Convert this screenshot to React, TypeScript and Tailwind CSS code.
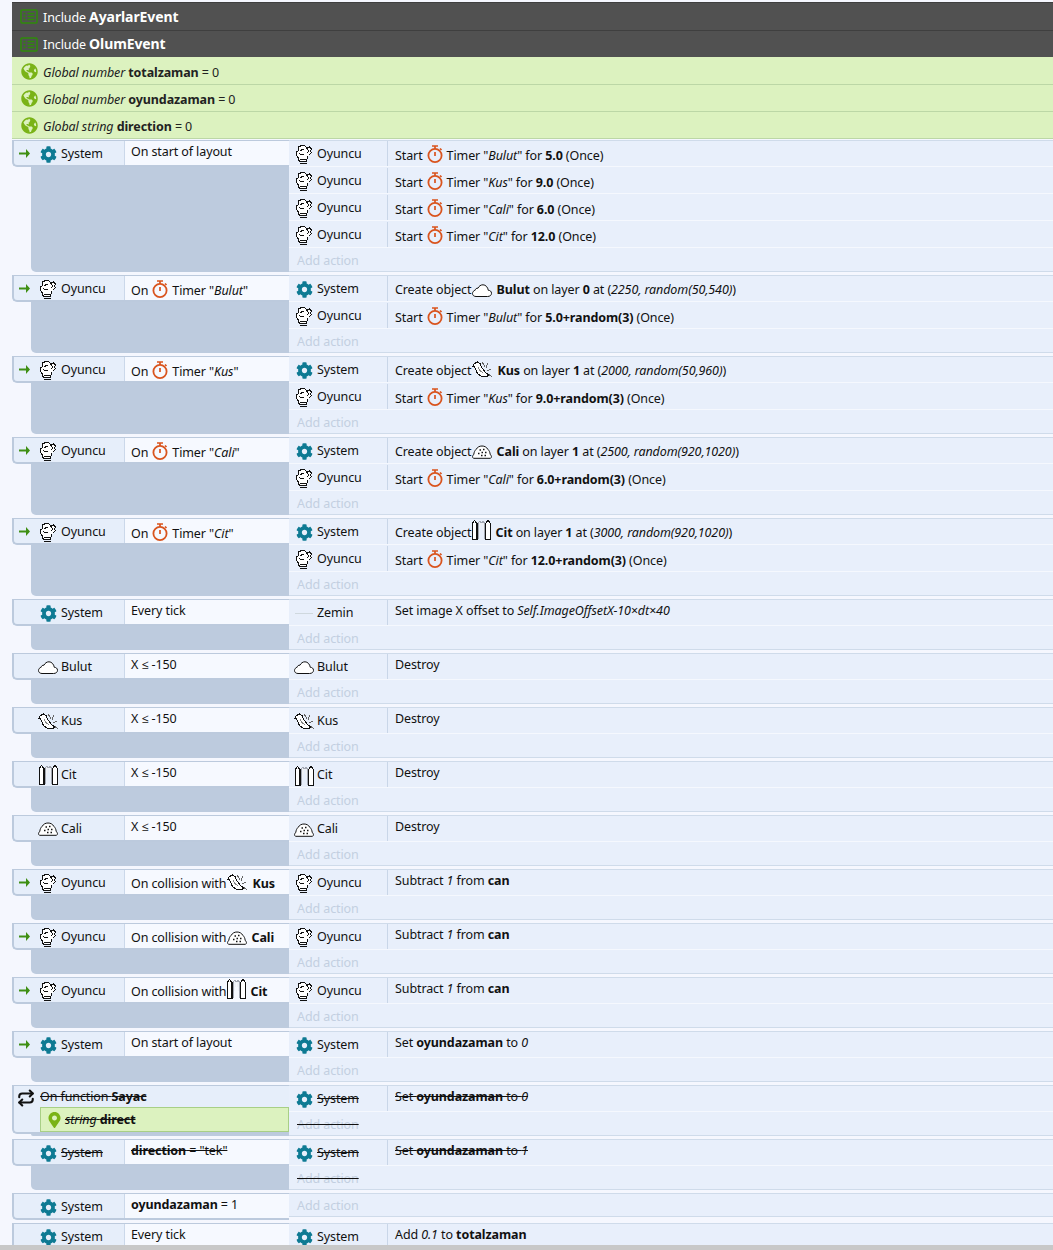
import type { ReactNode } from "react";
import { FaCog, FaGlobeAmericas, FaMapMarkerAlt } from "react-icons/fa";
import { Repeat } from "lucide-react";

type ObjName = "System" | "Oyuncu" | "Bulut" | "Kus" | "Cit" | "Cali" | "Zemin";

function OyuncuIcon() {
  return (
    <svg width="17" height="21" viewBox="0 0 17 21" fill="none" stroke="#111" strokeWidth="1" shapeRendering="crispEdges">
      <path d="M5.500 1.500h3l2 2v1l3-1.500 2 2-1 2 1 1.500-3 3-1.500 1v2.500l-1 2.500h-6l-1.500-1.500v-2l-2-2.500v-3.500l2-1.500v-3.500z" fill="#fff" />
      <path d="M4.500 6.500c1.500-1 3-1 4 0M3.500 9.500c1.500 1.500 3 1.500 4 .5M11.500 5.500l1.500 1.500-2 2" />
      <path d="M3.500 15.500h7M3.500 17.500h7M3.500 19.500h7" />
    </svg>
  );
}

function Cloud() {
  return (
    <svg width="20" height="13" viewBox="0 0 20 13" fill="#fff" stroke="#111" strokeWidth="1">
      <path d="M4 12.500h11.500c2.500 0 4-1.400 4-3.200 0-1.900-1.500-3-3.200-3C15.800 3.300 13.700.8 11 .8c-2.300 0-4 1.300-5 3.400-1.400-.3-2.600.7-2.800 2C1.700 6.600.5 8 .5 9.500c0 1.800 1.500 3 3.500 3z" />
    </svg>
  );
}

function Kus() {
  return (
    <svg width="21" height="17" viewBox="0 0 21 17" fill="none" stroke="#111" strokeWidth="1" shapeRendering="crispEdges">
      <path d="M10 1l3.500 5.500M15.500 2l-1.500 5M19 8l-4 2M16.500 13l3.500 3" stroke="#666" />
      <path d="M.5 5.500 2.500 2.500l3-1.500 2.500 1.500 1.500 3.500 3.500 5 3.500 3-2 2-5-.5-4-3L3.500 8l-1-2.500z" fill="#fff" />
      <path d="M6 6l2 3.500 3 2.500" stroke="#888" />
    </svg>
  );
}

function Cit() {
  return (
    <svg width="19" height="20" viewBox="0 0 19 20" fill="none" stroke="#111" strokeWidth="1.100" shapeRendering="crispEdges">
      <path d="M6 19V3.500L8 1l1.500 2.500M9.500 3.500 11 1l2 2.500V19" stroke="#a2a7b2" fill="#eef1f6" />
      <path d="M.5 19.500V3.500L2.500.5l2.500 3v16z" fill="#fff" />
      <path d="M13.500 19.500V3.500L16 .5l2.500 3v16z" fill="#fff" />
    </svg>
  );
}

function Cali() {
  return (
    <svg width="20" height="14" viewBox="0 0 20 14" fill="#fff" stroke="#111" strokeWidth="1">
      <path d="M1.500 13.300C.2 12.600.2 10.300 1.800 9.500 2 7 3 5.500 4 4.500 5.500 2 7.500 1 10 1s4.500 1 6 3.500c1 1 2 2.500 2.200 5 1.600.8 1.600 3.100.3 3.800z" />
      <path d="M7.500 5h1.500M11 4.500h1.500M9.500 7.500H11M13 7.500h1.500M6 8.500h1.500M9 10.500h1.500M12.500 10.500H14" strokeWidth="1.400" />
    </svg>
  );
}

function ObjIcon({ name }: { name: ObjName }) {
  if (name === "System") return <FaCog className="h-[17px] w-[17px] text-[#0e7a93]" />;
  if (name === "Oyuncu") return <OyuncuIcon />;
  if (name === "Bulut") return <Cloud />;
  if (name === "Kus") return <Kus />;
  if (name === "Cit") return <Cit />;
  if (name === "Cali") return <Cali />;
  return <span className="block h-px w-[18px] bg-[#cfd8de]" />;
}

function Timer() {
  return (
    <svg className="mx-[4px] inline-block align-[-3px]" width="16" height="18" viewBox="0 0 16 18" fill="none" stroke="#d9541e">
      <circle cx="8" cy="10.500" r="6.600" strokeWidth="1.800" />
      <path d="M5 1h6M8 1v3M8 7v4M13 3.500l1.500 1.500" strokeWidth="1.700" />
    </svg>
  );
}

function InlineObj({ name }: { name: ObjName }) {
  return (
    <span className="mx-[1px] inline-flex h-[13px] items-end align-[-3px]">
      <ObjIcon name={name} />
    </span>
  );
}

function B({ children }: { children: ReactNode }) {
  return <b className="font-bold text-[#111]">{children}</b>;
}

function I({ children }: { children: ReactNode }) {
  return <i className="italic">{children}</i>;
}

function StartTimer({ name, time }: { name: string; time: string }) {
  return (
    <span className="inline-block pt-[4px]">
      Start
      <Timer />
      Timer "<I>{name}</I>" for <B>{time}</B> (Once)
    </span>
  );
}

function OnTimer({ name }: { name: string }) {
  return (
    <span className="inline-block pt-[4px]">
      On
      <Timer />
      Timer "<I>{name}</I>"
    </span>
  );
}

function CreateObj({ name, layer, x, y }: { name: ObjName; layer: string; x: string; y: string }) {
  return (
    <span className="inline-block pt-[7px]">
      Create object
      <InlineObj name={name} /> <B>{name}</B> on layer <B>{layer}</B> at (<I>{x}, {y}</I>)
    </span>
  );
}

function Collision({ name }: { name: ObjName }) {
  return (
    <span className="inline-block pt-[6px]">
      On collision with
      <InlineObj name={name} /> <B>{name}</B>
    </span>
  );
}

function Subtract() {
  return (
    <>
      Subtract <I>1</I> from <B>can</B>
    </>
  );
}

type Action = { obj: ObjName; text: ReactNode };

type EventData = {
  obj: ObjName;
  cond: ReactNode;
  trigger?: boolean;
  off?: boolean;
  actions: Action[];
  last?: boolean;
};

const xBelow = <>X ≤ -150</>;

const events: EventData[] = [
  {
    obj: "System",
    cond: "On start of layout",
    trigger: true,
    actions: [
      { obj: "Oyuncu", text: <StartTimer name="Bulut" time="5.0" /> },
      { obj: "Oyuncu", text: <StartTimer name="Kus" time="9.0" /> },
      { obj: "Oyuncu", text: <StartTimer name="Cali" time="6.0" /> },
      { obj: "Oyuncu", text: <StartTimer name="Cit" time="12.0" /> },
    ],
  },
  {
    obj: "Oyuncu",
    cond: <OnTimer name="Bulut" />,
    trigger: true,
    actions: [
      { obj: "System", text: <CreateObj name="Bulut" layer="0" x="2250" y="random(50,540)" /> },
      { obj: "Oyuncu", text: <StartTimer name="Bulut" time="5.0+random(3)" /> },
    ],
  },
  {
    obj: "Oyuncu",
    cond: <OnTimer name="Kus" />,
    trigger: true,
    actions: [
      { obj: "System", text: <CreateObj name="Kus" layer="1" x="2000" y="random(50,960)" /> },
      { obj: "Oyuncu", text: <StartTimer name="Kus" time="9.0+random(3)" /> },
    ],
  },
  {
    obj: "Oyuncu",
    cond: <OnTimer name="Cali" />,
    trigger: true,
    actions: [
      { obj: "System", text: <CreateObj name="Cali" layer="1" x="2500" y="random(920,1020)" /> },
      { obj: "Oyuncu", text: <StartTimer name="Cali" time="6.0+random(3)" /> },
    ],
  },
  {
    obj: "Oyuncu",
    cond: <OnTimer name="Cit" />,
    trigger: true,
    actions: [
      { obj: "System", text: <CreateObj name="Cit" layer="1" x="3000" y="random(920,1020)" /> },
      { obj: "Oyuncu", text: <StartTimer name="Cit" time="12.0+random(3)" /> },
    ],
  },
  {
    obj: "System",
    cond: "Every tick",
    actions: [
      {
        obj: "Zemin",
        text: (
          <>
            Set image X offset to <I>Self.ImageOffsetX-10×dt×40</I>
          </>
        ),
      },
    ],
  },
  { obj: "Bulut", cond: xBelow, actions: [{ obj: "Bulut", text: "Destroy" }] },
  { obj: "Kus", cond: xBelow, actions: [{ obj: "Kus", text: "Destroy" }] },
  { obj: "Cit", cond: xBelow, actions: [{ obj: "Cit", text: "Destroy" }] },
  { obj: "Cali", cond: xBelow, actions: [{ obj: "Cali", text: "Destroy" }] },
  { obj: "Oyuncu", cond: <Collision name="Kus" />, trigger: true, actions: [{ obj: "Oyuncu", text: <Subtract /> }] },
  { obj: "Oyuncu", cond: <Collision name="Cali" />, trigger: true, actions: [{ obj: "Oyuncu", text: <Subtract /> }] },
  { obj: "Oyuncu", cond: <Collision name="Cit" />, trigger: true, actions: [{ obj: "Oyuncu", text: <Subtract /> }] },
  {
    obj: "System",
    cond: "On start of layout",
    trigger: true,
    actions: [
      {
        obj: "System",
        text: (
          <>
            Set <B>oyundazaman</B> to <I>0</I>
          </>
        ),
      },
    ],
  },
];

function ObjCell({ name, off }: { name: ObjName; off?: boolean }) {
  return (
    <span className="flex items-center">
      <span className="flex w-[22px] justify-center">
        <ObjIcon name={name} />
      </span>
      <span className={`ml-[2px] ${off ? "line-through" : ""}`}>{name}</span>
    </span>
  );
}

function ActionRow({ action, off }: { action: Action; off?: boolean }) {
  return (
    <div className="flex h-[27px] items-center border-b border-[#f5f8fe] bg-[#e8effb] first:shadow-[inset_0_1px_0_#cfdbea]">
      <div className="flex h-[25px] w-[99px] shrink-0 items-center border-r border-[#c9d6e8] pl-[4px] pt-[3px]">
        <ObjCell name={action.obj} off={off} />
      </div>
      <div className={`pb-[2px] pl-[7px] whitespace-nowrap ${off ? "line-through" : ""}`}>{action.text}</div>
    </div>
  );
}

function AddAction({ off }: { off?: boolean }) {
  return (
    <div className="flex h-[24px] items-center border-b border-[#cfdbea] bg-[#e8effb] pl-[8px] pt-[4px] text-[#c3cfe1] first:shadow-[inset_0_1px_0_#cfdbea]">
      <span className={off ? "line-through decoration-[#111]" : ""}>Add action</span>
    </div>
  );
}

function ArrowMark() {
  return (
    <svg width="11" height="9" viewBox="0 0 11 9" fill="#3f8f14">
      <path d="M0 3.500h7V0l4 4.500L7 9V5.500H0z" />
    </svg>
  );
}

function ConditionRow({ ev }: { ev: EventData }) {
  return (
    <div className="flex h-[27px] rounded-bl-[5px] border-b-2 border-l-2 border-t border-[#bccadd] bg-[#e6eefa]">
      <div className="flex w-[23px] shrink-0 items-center justify-center pr-[3px]">{ev.trigger && <ArrowMark />}</div>
      <div className="flex w-[88px] shrink-0 items-center border-r border-[#cbd8ea] pt-[2px]">
        <ObjCell name={ev.obj} off={ev.off} />
      </div>
      <div className={`flex flex-1 items-center bg-[#f6f9ff] pb-[2px] pl-[6px] whitespace-nowrap ${ev.off ? "line-through" : ""}`}>
        <span>{ev.cond}</span>
      </div>
    </div>
  );
}

function Event({ ev }: { ev: EventData }) {
  return (
    <div className="mb-[3px] flex">
      <div className="flex w-[277px] shrink-0 flex-col">
        <ConditionRow ev={ev} />
        {!ev.last && <div className="ml-[19px] flex-1 rounded-bl-[5px] bg-[#bdcbde]" />}
      </div>
      <div className="flex-1">
        {ev.actions.map((a, i) => (
          <ActionRow key={i} action={a} off={ev.off} />
        ))}
        {!ev.last && <AddAction off={ev.off} />}
      </div>
    </div>
  );
}

function IncludeRow({ name, tall }: { name: string; tall?: boolean }) {
  return (
    <div className={`flex items-center border-t border-[#3f3f3f] bg-[#515151] pl-[8px] text-white ${tall ? "h-[28px]" : "h-[27px]"}`}>
      <svg width="18" height="15" viewBox="0 0 18 15" fill="none" stroke="#2f8a0a" strokeWidth="1.500">
        <rect x="1" y="1" width="16" height="13" rx="1" />
        <path d="M3.500 4.500h2M7.500 4.500h7M3.500 7.500h2M7.500 7.500h7M3.500 10.500h2M7.500 10.500h7" />
      </svg>
      <span className={`ml-[5px] ${tall ? "pt-[2px]" : ""}`}>
        Include <b className="text-[14px] font-bold">{name}</b>
      </span>
    </div>
  );
}

function GlobalRow({ type, name, tall }: { type: string; name: string; tall?: boolean }) {
  return (
    <div className={`flex items-center border-b border-[#bcd7a6] bg-[#dcf2bf] pl-[9px] pt-[1px] text-[#222] ${tall ? "h-[28px]" : "h-[27px]"}`}>
      <FaGlobeAmericas className="h-[17px] w-[17px] text-[#7ab317]" />
      <span className="ml-[5px] pt-[4px]">
        <I>Global {type}</I> <b className="font-bold">{name}</b> = 0
      </span>
    </div>
  );
}

export default function App() {
  return (
    <div className="flex h-[1250px] w-[1053px] flex-col overflow-hidden bg-[#f5f7fe] font-['Noto_Sans','Open_Sans',sans-serif] text-[12.5px] leading-none tracking-[-0.1px] text-[#111]">
      <div className="min-h-0 flex-1 overflow-hidden pl-[12px] pt-[2px]">
        <IncludeRow name="AyarlarEvent" tall />
        <IncludeRow name="OlumEvent" />
        <GlobalRow type="number" name="totalzaman" tall />
        <GlobalRow type="number" name="oyundazaman" />
        <div className="mb-[1px]">
          <GlobalRow type="string" name="direction" />
        </div>
        {events.map((ev, i) => (
          <Event key={i} ev={ev} />
        ))}

        {/* disabled function */}
        <div className="mb-[3px] flex">
          <div className="flex w-[277px] shrink-0 flex-col">
            <div className="rounded-bl-[5px] border-b-2 border-l-2 border-t border-[#bccadd] bg-[#e6eefa]">
              <div className="flex h-[21px] items-center pt-[2px]">
                <span className="flex w-[26px] justify-center pr-[3px]">
                  <Repeat size={18} strokeWidth={2.800} className="text-[#111]" />
                </span>
                <span className="line-through">
                  On function <B>Sayac</B>
                </span>
              </div>
              <div className="ml-[26px] flex h-[25px] items-center border border-[#a8cf86] bg-[#dcf2bf] pl-[7px]">
                <FaMapMarkerAlt className="h-[16px] w-[13px] text-[#7ab317]" />
                <span className="ml-[4px] pt-[2px] line-through">
                  <I>string</I> <B>direct</B>
                </span>
              </div>
            </div>
            <div className="ml-[19px] flex-1 rounded-bl-[5px] bg-[#bdcbde]" />
          </div>
          <div className="flex-1">
            <ActionRow
              off
              action={{
                obj: "System",
                text: (
                  <>
                    Set <B>oyundazaman</B> to <I>0</I>
                  </>
                ),
              }}
            />
            <AddAction off />
          </div>
        </div>

        <Event
          ev={{
            obj: "System",
            off: true,
            cond: (
              <>
                <B>direction</B> = "tek"
              </>
            ),
            actions: [
              {
                obj: "System",
                text: (
                  <>
                    Set <B>oyundazaman</B> to <I>1</I>
                  </>
                ),
              },
            ],
          }}
        />

        {/* nested sub-event, only an empty add action beside it */}
        <div className="mb-[3px] flex">
          <div className="w-[277px] shrink-0">
            <ConditionRow
              ev={{
                obj: "System",
                cond: (
                  <>
                    <B>oyundazaman</B> = 1
                  </>
                ),
                actions: [],
              }}
            />
          </div>
          <div className="flex-1 self-start">
            <AddAction />
          </div>
        </div>

        <Event
          ev={{
            obj: "System",
            cond: "Every tick",
            last: true,
            actions: [
              {
                obj: "System",
                text: (
                  <>
                    Add <I>0.1</I> to <B>totalzaman</B>
                  </>
                ),
              },
            ],
          }}
        />
      </div>
      <div className="h-[5px] shrink-0 bg-[#c8c8c8]" />
    </div>
  );
}
